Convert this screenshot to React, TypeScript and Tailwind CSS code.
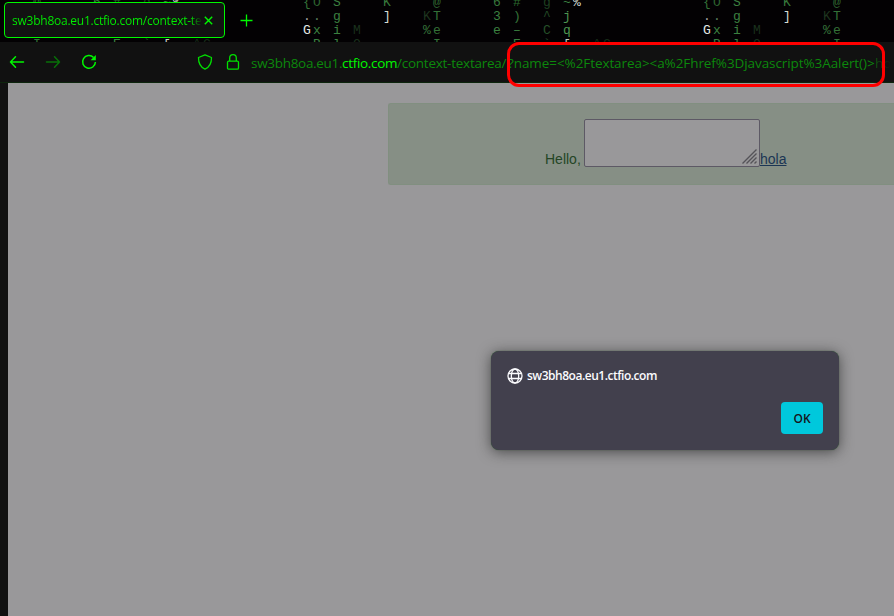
import React from "react";

type Glyph = [number, number, string, string];

const tile: Glyph[] = [
  [307, 6, "{", "#347037"], [317, 6, "O", "#2b602e"], [337, 6, "S", "#3b8040"], [387, 6, "K", "#37793b"], [437, 6, "@", "#2e6631"],
  [497, 6, "6", "#37793b"], [517, 6, "#", "#2b692f"], [547, 6, "g", "#1e4020"], [567, 6, "~", "#3b8040"], [577, 6, "%", "#d5dcd5"],
  [307, 20, ".", "#a0a0a0"], [317, 20, ".", "#5b7b5d"], [337, 20, "g", "#3b8040"], [387, 20, "]", "#d5dcd5"],
  [427, 20, "K", "#1e351f"], [437, 20, "T", "#347037"], [497, 20, "3", "#3b8040"], [517, 20, ")", "#347037"],
  [547, 20, "^", "#224824"], [567, 20, "j", "#4d9550"],
  [307, 34, "G", "#e5eae5"], [317, 34, "x", "#3b8040"], [337, 34, "i", "#3b8040"], [357, 34, "M", "#1a301c"],
  [427, 34, "%", "#347037"], [437, 34, "e", "#347037"], [497, 34, "e", "#3b8040"], [517, 34, "–", "#3b8040"],
  [547, 34, "C", "#265029"], [567, 34, "q", "#4d9550"],
  [317, 48, "B", "#3b8040"], [337, 48, "l", "#3b8040"], [357, 48, "O", "#1a301c"], [437, 48, "I", "#347037"],
  [517, 48, "E", "#3b8040"], [547, 48, "`", "#265029"], [567, 48, "[", "#c5ccc5"], [597, 48, "^", "#172b18"], [607, 48, "C", "#172b18"],
];

const behindTab = (x: number, y: number) => x < 228 && y > 10 && y < 40;

function Rain() {
  return (
    <svg className="absolute inset-0" width="894" height="42" fontFamily="Liberation Mono, monospace" fontSize="13" textAnchor="middle">
      {[-400, 0, 400].map((dx) =>
        tile.map(([x, y, c, fill], i) =>
          x + dx > 0 && x + dx < 890 && !behindTab(x + dx, y) ? (
            <text key={`${dx}-${i}`} x={x + dx} y={y} fill={fill}>{c}</text>
          ) : null
        )
      )}
    </svg>
  );
}

function TabStrip() {
  return (
    <div className="relative h-[42px] overflow-hidden bg-[#030103]">
      <Rain />
      <div className="relative flex items-center pl-1 pt-0.5">
        <div className="flex h-9 w-[221px] items-center rounded-[4px] border border-[#00f800] bg-[#121212] pl-[7px]">
          <span className="w-[190px] overflow-hidden whitespace-nowrap bg-gradient-to-r from-[#00f000] from-94% to-transparent bg-clip-text pt-px text-[12px] tracking-[-0.24px] text-transparent">
            sw3bh8oa.eu1.ctfio.com/context-textarea
          </span>
          <svg className="ml-[2px]" width="9" height="9" viewBox="0 0 9 9" stroke="#00f800" strokeWidth="1.4"><path d="M.8.8l7.4 7.4M8.2.8L.8 8.2" /></svg>
        </div>
        <svg className="ml-[15px]" width="13" height="13" viewBox="0 0 13 13" stroke="#00f800" strokeWidth="1.3"><path d="M6.5.5v12M.5 6.5h12" /></svg>
      </div>
    </div>
  );
}

function NavBar() {
  return (
    <div className="relative h-[41px] border-b border-[#0d250d] bg-[#111111]">
      <div className="flex h-10 items-center overflow-hidden pl-[9px]">
        <svg width="16" height="16" viewBox="0 0 16 16" fill="none" stroke="#00f800" strokeWidth="1.5" strokeLinecap="round" strokeLinejoin="round"><path d="M14.5 8H1.5M6.5 2.8L1.5 8l5 5.2" /></svg>
        <svg className="ml-5" width="16" height="16" viewBox="0 0 16 16" fill="none" stroke="#087008" strokeWidth="1.5" strokeLinecap="round" strokeLinejoin="round"><path d="M1.5 8h13M9.5 2.8l5 5.2-5 5.2" /></svg>
        <svg className="ml-5" width="16" height="16" viewBox="0 0 16 16" fill="none" stroke="#00f800" strokeWidth="1.5"><path d="M12.6 3.4A6.4 6.4 0 1 0 14.4 8" /><path d="M14.8 1v5.2H9.6z" fill="#00f800" stroke="none" /></svg>
        <svg className="ml-[100px]" width="16" height="16" viewBox="0 0 16 16" fill="none" stroke="#00e000" strokeWidth="1.3" strokeLinejoin="round"><path d="M8 .8L14.5 3.5C14.6 8.5 12.8 13 8 15.2 3.2 13 1.4 8.5 1.5 3.5z" /></svg>
        <svg className="ml-3" width="16" height="16" viewBox="0 0 16 16" fill="none" stroke="#00e000" strokeWidth="1.3"><rect x="2.5" y="7.2" width="11" height="8" rx="1.3" /><path d="M4.7 7V4a3.3 3.3 0 0 1 6.6 0v3" /></svg>
        <div className="ml-[10px] flex whitespace-nowrap pt-[2px] text-[13.5px] text-[#0c880c]">
          <span className="w-[91px] tracking-[-0.3px]">sw3bh8oa.eu1.</span>
          <span className="w-[55px] tracking-[-0.3px] text-[#00f800]">ctfio.com</span>
          <span className="w-[111px] tracking-[-0.25px]">/context-textarea/</span>
          <span className="w-[367px] tracking-[-0.08px]">?name=&lt;%2Ftextarea&gt;&lt;a%2Fhref%3Djavascript%3Aalert()&gt;</span>
          <span className="bg-gradient-to-r from-[#0b5a0b] to-[#111] bg-clip-text text-transparent">ho</span>
        </div>
      </div>
      <div className="absolute left-[507px] top-0 h-[45px] w-[378px] rounded-[12px] border-[3px] border-[#ff0000]" />
    </div>
  );
}

function Alert() {
  return (
    <div className="absolute left-[491px] top-[351px] flex h-[99px] w-[348px] flex-col rounded-[8px] bg-[#42404d] pl-4 pr-4 pt-4 shadow-[0_2px_14px_rgba(30,30,30,0.65),0_0_1px_#216b21]">
      <div className="flex h-[18px] items-center">
        <svg width="16" height="16" viewBox="0 0 16 16" fill="none" stroke="#fbfbfe" strokeWidth="1.3"><circle cx="8" cy="8" r="7" /><ellipse cx="8" cy="8" rx="3.7" ry="7" /><path d="M1.5 5.5h13M1.5 10.5h13" /></svg>
        <span className="ml-1 whitespace-nowrap text-[12px] font-semibold tracking-[-0.48px] text-[#fbfbfe]">sw3bh8oa.eu1.ctfio.com</span>
      </div>
      <button className="mt-[17px] h-8 w-[42px] self-end rounded-[4px] bg-[#00c8dc] pt-px text-[12px] font-semibold text-[#15141a]">OK</button>
    </div>
  );
}

export default function App() {
  return (
    <div className="relative flex h-[616px] w-[894px] flex-col overflow-hidden bg-[#111111] font-['Open_Sans','Noto_Sans',sans-serif]">
      <TabStrip />
      <NavBar />
      <main className="ml-2 flex-1 bg-[#99989a] pl-[380px] pt-5">
        <div className="flex h-[82px] w-[555px] items-end rounded-[3px] border border-r-0 border-[#818f80] bg-[#868f85] pb-[17px] pl-[156px] font-['Liberation_Sans',Arial,sans-serif] text-[14px] leading-[14px] text-[#244625]">
          <span className="w-[39px] whitespace-nowrap pb-px">Hello,</span>
          <div className="flex h-12 w-44 shrink-0 items-end justify-end rounded-[2px] border border-[#5d5965] bg-[#99989a] p-[2px]">
            <svg width="15" height="15" viewBox="0 0 15 15" stroke="#555358" strokeWidth="1.4"><path d="M.5 14.5l14-14M4.5 14.5l10-10M8.5 14.5l6-6M12.5 14.5l2-2" /></svg>
          </div>
          <a className="pb-px text-[#1b3554] underline">hola</a>
        </div>
      </main>
      <Alert />
    </div>
  );
}
